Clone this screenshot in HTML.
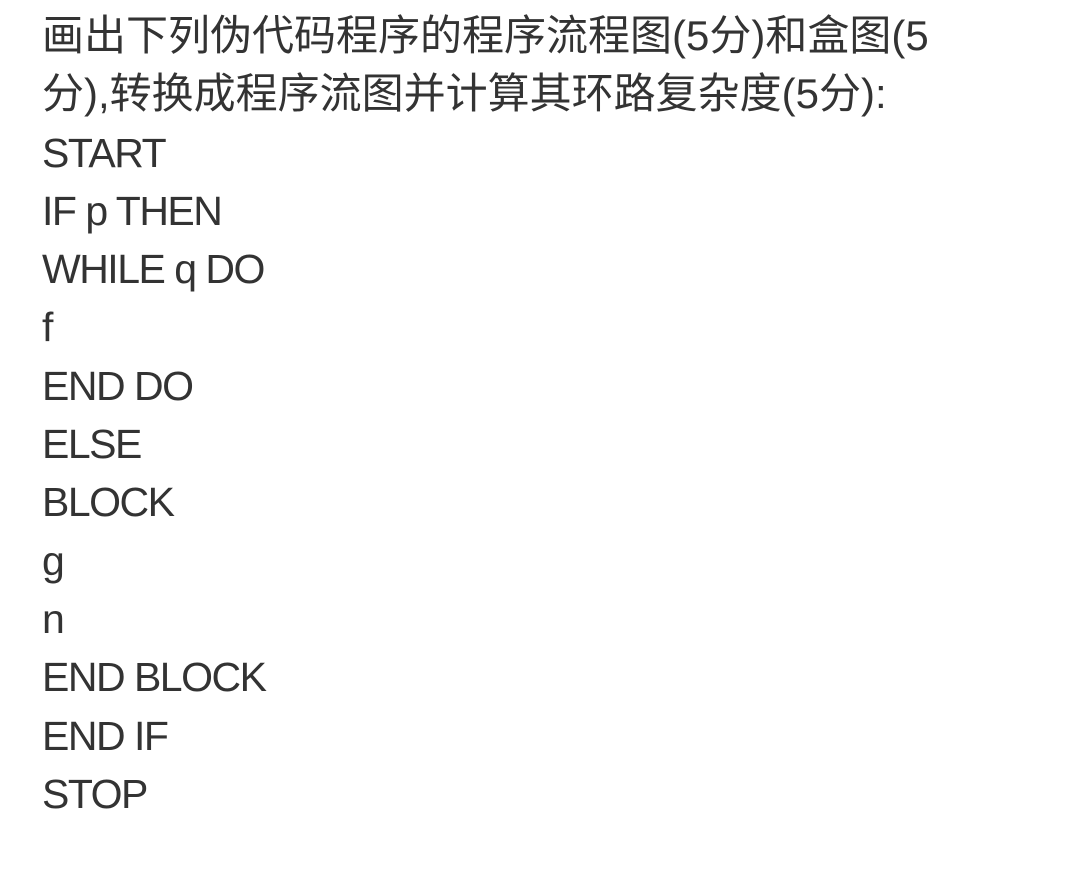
<!DOCTYPE html>
<html>
<head>
<meta charset="utf-8">
<style>
html,body{margin:0;padding:0;background:#fff;width:1086px;height:874px;overflow:hidden;}
.c{position:absolute;left:42px;top:7px;font-family:"Liberation Sans","Noto Sans CJK SC",sans-serif;font-size:41px;line-height:58.3px;color:#333;white-space:nowrap;letter-spacing:-1.5px;}
.z{font-size:42px;letter-spacing:0;}
</style>
</head>
<body>
<div class="c">
<span class="z">画出下列伪代码程序的程序流程图(5分)和盒图(5</span><br>
<span class="z">分),转换成程序流图并计算其环路复杂度(5分):</span><br>
START<br>
IF p THEN<br>
WHILE q DO<br>
f<br>
END DO<br>
ELSE<br>
BLOCK<br>
g<br>
n<br>
END BLOCK<br>
END IF<br>
STOP
</div>
</body>
</html>
